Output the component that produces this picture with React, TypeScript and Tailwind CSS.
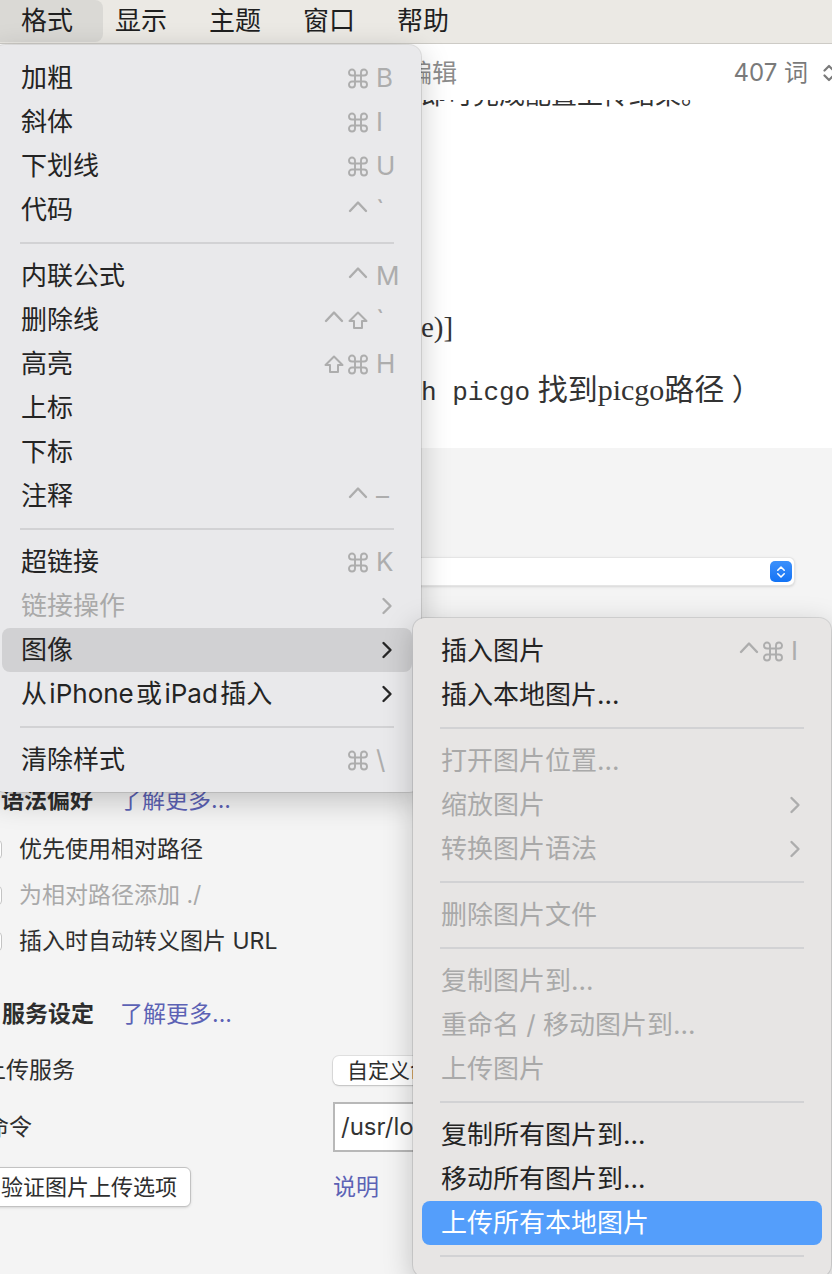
import { Command } from 'lucide-react';
import { clsx } from 'clsx';

type Mod = 'ctrl' | 'shift' | 'cmd';

type MenuEntry =
  | { sep: true }
  | {
      sep?: false;
      label: string;
      mods?: Mod[];
      keyName?: string;
      sub?: boolean;
      disabled?: boolean;
      active?: 'gray' | 'blue';
    };

const formatMenu: MenuEntry[] = [
  { label: '加粗', mods: ['cmd'], keyName: 'B' },
  { label: '斜体', mods: ['cmd'], keyName: 'I' },
  { label: '下划线', mods: ['cmd'], keyName: 'U' },
  { label: '代码', mods: ['ctrl'], keyName: '`' },
  { sep: true },
  { label: '内联公式', mods: ['ctrl'], keyName: 'M' },
  { label: '删除线', mods: ['ctrl', 'shift'], keyName: '`' },
  { label: '高亮', mods: ['shift', 'cmd'], keyName: 'H' },
  { label: '上标' },
  { label: '下标' },
  { label: '注释', mods: ['ctrl'], keyName: '–' },
  { sep: true },
  { label: '超链接', mods: ['cmd'], keyName: 'K' },
  { label: '链接操作', sub: true, disabled: true },
  { label: '图像', sub: true, active: 'gray' },
  { label: '从\u200aiPhone\u200a或\u200aiPad\u200a插入', sub: true },
  { sep: true },
  { label: '清除样式', mods: ['cmd'], keyName: '\\' },
];

const imageMenu: MenuEntry[] = [
  { label: '插入图片', mods: ['ctrl', 'cmd'], keyName: 'I' },
  { label: '插入本地图片...' },
  { sep: true },
  { label: '打开图片位置...', disabled: true },
  { label: '缩放图片', sub: true, disabled: true },
  { label: '转换图片语法', sub: true, disabled: true },
  { sep: true },
  { label: '删除图片文件', disabled: true },
  { sep: true },
  { label: '复制图片到...', disabled: true },
  { label: '重命名 / 移动图片到...', disabled: true },
  { label: '上传图片', disabled: true },
  { sep: true },
  { label: '复制所有图片到...' },
  { label: '移动所有图片到...' },
  { label: '上传所有本地图片', active: 'blue' },
  { sep: true },
];

function ModGlyph({ mod }: { mod: Mod }) {
  if (mod === 'cmd') {
    return (
      <span className="flex w-[24px] justify-center">
        <Command size={25} strokeWidth={1.9} className="text-[#adadad]" />
      </span>
    );
  }
  if (mod === 'shift') {
    return (
      <span className="flex w-[24px] justify-center">
        <svg width="22" height="22" viewBox="0 0 22 22" fill="none" stroke="#adadad" strokeWidth="2" strokeLinejoin="round">
          <path d="M11 3.5 L19.5 12 H15 V19 H7 V12 H2.5 Z" />
        </svg>
      </span>
    );
  }
  return (
    <span className="flex w-[24px] justify-center">
      <svg width="20" height="22" viewBox="0 0 20 22" fill="none" stroke="#adadad" strokeWidth="2.4" strokeLinecap="round" strokeLinejoin="round">
        <polyline points="2,12 10,3.5 18,12" />
      </svg>
    </span>
  );
}

function Chevron({ disabled }: { disabled?: boolean }) {
  return (
    <svg width="12" height="18" viewBox="0 0 12 18" fill="none" stroke={disabled ? '#adadad' : '#262626'} strokeWidth="2.4" strokeLinecap="round" strokeLinejoin="round">
      <polyline points="2.5,2 9.5,9 2.5,16" />
    </svg>
  );
}

function Menu({ entries, keyPad, chevPad }: { entries: MenuEntry[]; keyPad: string; chevPad: string }) {
  return (
    <>
      {entries.map((e, i) => {
        if (e.sep) {
          return <div key={i} className="mx-[27px] my-[10px] h-[2px] bg-[#d2d2d4]" />;
        }
        return (
          <div
            key={i}
            className={clsx(
              'mx-[9px] flex h-11 items-center rounded-[8px] pl-[19px] text-[26px] leading-none whitespace-nowrap',
              e.disabled ? 'text-[#a9a9a9]' : 'text-[#242424]',
              e.active === 'gray' && 'bg-[#d1d1d3]',
              e.active === 'blue' && 'bg-[#549efb] text-white'
            )}
          >
            <span className="flex-1">{e.label}</span>
            {e.keyName && (
              <span className={clsx('flex items-center', keyPad)}>
                {e.mods?.map((m, j) => <ModGlyph key={j} mod={m} />)}
                <span className="ml-[6px] w-[20px] text-[26px] text-[#adadad]">{e.keyName}</span>
              </span>
            )}
            {e.sub && (
              <span className={chevPad}>
                <Chevron disabled={e.disabled} />
              </span>
            )}
          </div>
        );
      })}
    </>
  );
}

function UpDown({ color, w = 14 }: { color: string; w?: number }) {
  return (
    <svg width={w} height="22" viewBox="0 0 14 22" fill="none" stroke={color} strokeWidth="2.2" strokeLinecap="round" strokeLinejoin="round">
      <polyline points="2.5,8.5 7,4 11.5,8.5" />
      <polyline points="2.5,13.5 7,18 11.5,13.5" />
    </svg>
  );
}

export default function App() {
  return (
    <div className="relative flex h-[1274px] w-[832px] flex-col overflow-hidden bg-[#f4f4f4] font-[Inter,'Noto_Sans_CJK_SC',sans-serif]">
      {/* Menu bar */}
      <div className="flex h-[44px] shrink-0 items-start border-b border-[#cdcbc6] bg-[#ebe9e4] text-[26px] leading-none text-[#1f1f1f]">
        <div className="-ml-[8px] flex h-[42px] w-[111px] items-center rounded-[8px] bg-[#dad9d5] pl-[29px]">格式</div>
        <div className="flex h-[42px] items-center gap-[42px] pl-[12px]">
          <span>显示</span>
          <span>主题</span>
          <span>窗口</span>
          <span>帮助</span>
        </div>
      </div>

      {/* Editor */}
      <div className="h-[404px] shrink-0 bg-white">
        <div className="flex h-[56px] items-start pl-[407px] pt-[13px] leading-[32px]">
          <span className="text-[25px] text-[#8c8c8c]">编辑</span>
          <span className="-mr-[4px] ml-auto flex items-center gap-[14px]">
            <span className="text-[24px] text-[#7a7a7a]">407 词</span>
            <UpDown color="#7a7a7a" />
          </span>
        </div>
        <div className="h-[8px] overflow-hidden pl-[421px]">
          <div className="-mt-[23px] whitespace-nowrap text-[26px] leading-[36px] text-[#333]">即可完成配置上传结果。</div>
        </div>
        <div className="mt-[199px] h-[40px] whitespace-nowrap pl-[421px] font-['Liberation_Serif','Noto_Sans_CJK_SC',serif] text-[29px] leading-[40px] text-[#333]">
          e)]
        </div>
        <div className="mt-[23px] h-[40px] whitespace-nowrap pl-[421px] font-['Liberation_Serif','Noto_Sans_CJK_SC',serif] text-[30px] leading-[40px] text-[#333]">
          <span className="font-['Liberation_Mono',monospace] text-[26px]">h picgo</span> 找到picgo路径 ）
        </div>
      </div>

      {/* Preferences panel */}
      <div className="flex-1 text-[23px] leading-none text-[#2e2e2e]">
        <div className="ml-[300px] mt-[109px] flex h-[29px] w-[495px] items-center justify-end rounded-[6px] border border-black/10 bg-white pr-[2px] shadow-sm">
          <span className="flex h-[21px] w-[22px] items-center justify-center rounded-[5px] bg-gradient-to-b from-[#3b90fb] to-[#1273f5]">
            <UpDown color="#ffffff" w={10} />
          </span>
        </div>

        <div className="mt-[199px] flex h-[30px] items-center gap-[26px] pl-[1px]">
          <span className="font-bold">语法偏好</span>
          <span className="text-[#5c62b5]">了解更多...</span>
        </div>

        <div className="mt-[11px]">
          {[
            { t: '优先使用相对路径', d: false },
            { t: '为相对路径添加 ./', d: true },
            { t: '插入时自动转义图片 URL', d: false },
          ].map((r) => (
            <div key={r.t} className="flex h-[46px] items-center">
              <span className="-ml-[16px] h-[19px] w-[18px] rounded-[4px] border border-[#c4c4c4] bg-white" />
              <span className={clsx('ml-[17px]', r.d && 'text-[#a9a9a9]')}>{r.t}</span>
            </div>
          ))}
        </div>

        <div className="mt-[35px] flex h-[30px] items-center gap-[26px] pl-[2px]">
          <span className="font-bold">服务设定</span>
          <span className="text-[#5c62b5]">了解更多...</span>
        </div>

        <div className="mt-[26px] grid h-[30px] grid-cols-[333px_1fr] items-center">
          <span className="-ml-[17px]">上传服务</span>
          <span className="flex h-[29px] w-[200px] items-center rounded-[6px] bg-white pl-[14px] text-[21px] shadow-[0_0_0_1px_rgba(0,0,0,0.08),0_1px_2px_rgba(0,0,0,0.15)]">
            自定义命令
          </span>
        </div>

        <div className="mt-[17px] grid h-[50px] grid-cols-[333px_1fr] items-center">
          <span className="-ml-[14px]">命令</span>
          <span className="flex h-[50px] w-[300px] items-center border-2 border-[#b8b8b8] bg-white pl-[6px] text-[24px] text-[#333]">
            /usr/local/bin/picgo
          </span>
        </div>

        <div className="mt-[15px] grid h-[40px] grid-cols-[333px_1fr] items-center">
          <span className="-ml-[20px] flex h-[40px] w-[211px] items-center rounded-[6px] border border-[#c2c2c2] bg-white pl-[20px] text-[22px] shadow-sm">
            验证图片上传选项
          </span>
          <span className="text-[#5c62b5]">说明</span>
        </div>
      </div>

      {/* Format menu */}
      <div className="absolute left-[-7px] top-[45px] w-[428px] rounded-[12px] bg-[#e9e9eb] pb-[10px] pt-[11px] shadow-[0_8px_30px_rgba(0,0,0,0.22)] ring-1 ring-black/10">
        <Menu entries={formatMenu} keyPad="pr-[16px]" chevPad="pr-[19px]" />
      </div>

      {/* Image submenu */}
      <div className="absolute left-[413px] top-[618px] w-[418px] rounded-[12px] bg-[#e7e5e4] pb-[10px] pt-[11px] shadow-[0_8px_30px_rgba(0,0,0,0.22)] ring-1 ring-black/10">
        <Menu entries={imageMenu} keyPad="pr-[11px]" chevPad="pr-[21px]" />
      </div>
    </div>
  );
}
